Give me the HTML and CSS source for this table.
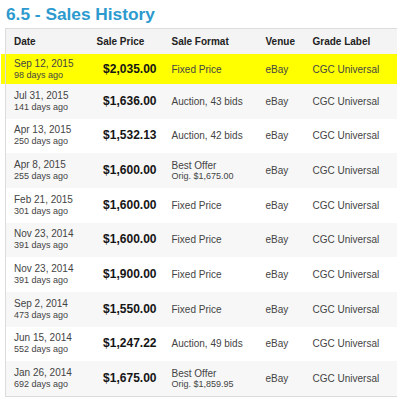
FILE: index.html
```html
<!DOCTYPE html>
<html>
<head>
<meta charset="utf-8">
<link rel="stylesheet" href="styles.css">
</head>
<body>
<h1 class="title">6.5 - Sales History</h1>
<table class="sales">
  <colgroup>
    <col class="c-date"><col class="c-price"><col class="c-format"><col class="c-venue"><col class="c-grade">
  </colgroup>
  <thead>
    <tr><th>Date</th><th>Sale Price</th><th>Sale Format</th><th>Venue</th><th>Grade Label</th></tr>
  </thead>
  <tbody>
    <tr class="hl"><td class="date">Sep 12, 2015<span class="ago">98 days ago</span></td><td class="price">$2,035.00</td><td>Fixed Price</td><td>eBay</td><td>CGC Universal</td></tr>
    <tr class="odd"><td class="date">Jul 31, 2015<span class="ago">141 days ago</span></td><td class="price">$1,636.00</td><td>Auction, 43 bids</td><td>eBay</td><td>CGC Universal</td></tr>
    <tr><td class="date">Apr 13, 2015<span class="ago">250 days ago</span></td><td class="price">$1,532.13</td><td>Auction, 42 bids</td><td>eBay</td><td>CGC Universal</td></tr>
    <tr class="odd"><td class="date">Apr 8, 2015<span class="ago">255 days ago</span></td><td class="price">$1,600.00</td><td>Best Offer<span class="orig">Orig. $1,675.00</span></td><td>eBay</td><td>CGC Universal</td></tr>
    <tr><td class="date">Feb 21, 2015<span class="ago">301 days ago</span></td><td class="price">$1,600.00</td><td>Fixed Price</td><td>eBay</td><td>CGC Universal</td></tr>
    <tr class="odd"><td class="date">Nov 23, 2014<span class="ago">391 days ago</span></td><td class="price">$1,600.00</td><td>Fixed Price</td><td>eBay</td><td>CGC Universal</td></tr>
    <tr><td class="date">Nov 23, 2014<span class="ago">391 days ago</span></td><td class="price">$1,900.00</td><td>Fixed Price</td><td>eBay</td><td>CGC Universal</td></tr>
    <tr class="odd"><td class="date">Sep 2, 2014<span class="ago">473 days ago</span></td><td class="price">$1,550.00</td><td>Fixed Price</td><td>eBay</td><td>CGC Universal</td></tr>
    <tr><td class="date">Jun 15, 2014<span class="ago">552 days ago</span></td><td class="price">$1,247.22</td><td>Auction, 49 bids</td><td>eBay</td><td>CGC Universal</td></tr>
    <tr class="odd"><td class="date">Jan 26, 2014<span class="ago">692 days ago</span></td><td class="price">$1,675.00</td><td>Best Offer<span class="orig">Orig. $1,859.95</span></td><td>eBay</td><td>CGC Universal</td></tr>
  </tbody>
</table>
</body>
</html>
```
FILE: styles.css
```css
html, body {
  margin: 0;
  padding: 0;
  overflow: hidden;
  background: #fff;
}
body {
  font-family: "Liberation Sans", Arial, sans-serif;
  padding: 0 0 0 5px;
}
.title {
  margin: 0;
  padding: 4px 0 0 1px;
  height: 24px;
  font-size: 17.3px;
  line-height: 20px;
  font-weight: bold;
  color: #2c9ace;
}
.sales {
  table-layout: fixed;
  width: 392px;
  border-collapse: collapse;
  border: 1px solid #dcdcdc;
  border-right: 0;
  font-size: 10px;
  color: #444;
}
.c-date { width: 83px; }
.c-price { width: 75px; }
.c-format { width: 94px; }
.c-venue { width: 47px; }
.c-grade { width: 93px; }
.sales th {
  background: #f4f4f4;
  text-align: left;
  font-weight: bold;
  color: #222;
  height: 25px;
  padding: 0 0 0 8px;
  vertical-align: middle;
  font-size: 10px;
  white-space: nowrap;
}
.sales td {
  height: 34.67px;
  padding: 0 0 0 8px;
  vertical-align: middle;
  line-height: 11px;
  white-space: nowrap;
}
.sales tr.odd td { background: #f7f7f7; }
.sales tr.hl td { background: #ffff00; height: 30px; }
.sales tr.hl td:first-child { box-shadow: -5px 0 0 #ffff00; }
.ago, .orig {
  display: block;
  font-size: 9px;
  line-height: 11px;
}
.sales td.date { line-height: 12px; }
.sales td.price {
  text-align: right;
  padding: 0 7px 0 0;
  font-weight: bold;
  font-size: 12px;
  color: #151515;
}
```
